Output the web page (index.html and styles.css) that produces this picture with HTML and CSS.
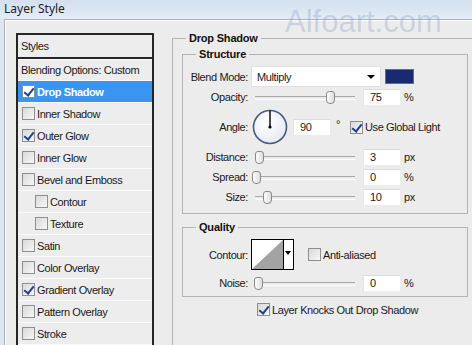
FILE: index.html
```html
<!DOCTYPE html>
<html>
	<head>
		<meta charset="utf-8">
		<title>Layer Style</title>
		<link rel="stylesheet" href="styles.css">
	</head>
	<body>
		<div class="titlebar">Layer Style</div>
		<div class="watermark">Alfoart.com</div>
		<div class="window">
			<ul class="styles">
				<li class="head">Styles</li>
				<li class="blend">Blending Options: Custom</li>
				<li class="current"><span class="cb on"></span>Drop Shadow</li>
				<li><span class="cb"></span>Inner Shadow</li>
				<li><span class="cb on"></span>Outer Glow</li>
				<li><span class="cb"></span>Inner Glow</li>
				<li><span class="cb"></span>Bevel and Emboss</li>
				<li class="sub"><span class="cb"></span>Contour</li>
				<li class="sub"><span class="cb"></span>Texture</li>
				<li><span class="cb"></span>Satin</li>
				<li><span class="cb"></span>Color Overlay</li>
				<li><span class="cb on"></span>Gradient Overlay</li>
				<li><span class="cb"></span>Pattern Overlay</li>
				<li><span class="cb"></span>Stroke</li>
			</ul>
			<fieldset class="group panel">
				<legend>Drop Shadow</legend>
				<fieldset class="group structure">
					<legend>Structure</legend>
					<div class="row row-blend">
						<label>Blend Mode:</label>
						<div class="select">Multiply<span class="arrow"></span></div>
						<div class="swatch"></div>
					</div>
					<div class="row">
						<label>Opacity:</label>
						<div class="track"><span class="thumb" style="left:71px"></span></div>
						<div class="num">75</div>
						<span class="unit">%</span>
					</div>
					<div class="row row-angle">
						<label>Angle:</label>
						<div class="dial">
							<svg width="36" height="36" viewBox="0 0 36 36">
								<defs>
									<radialGradient id="dialfill" cx="40%" cy="35%" r="70%">
										<stop offset="0" stop-color="#ffffff"/>
										<stop offset="1" stop-color="#e4eaf2"/>
									</radialGradient>
								</defs>
								<circle cx="18" cy="18" r="16.5" fill="url(#dialfill)" stroke="#4a5a7e" stroke-width="1.6"/>
								<line x1="18" y1="18" x2="18" y2="1.5" stroke="#000" stroke-width="1.4"/>
								<circle cx="18" cy="18" r="1.6" fill="#000"/>
							</svg>
						</div>
						<div class="num">90</div>
						<span class="deg">°</span>
						<span class="cb on"></span>
						<span class="cb-text">Use Global Light</span>
					</div>
					<div class="row">
						<label>Distance:</label>
						<div class="track"><span class="thumb" style="left:0px"></span></div>
						<div class="num">3</div>
						<span class="unit">px</span>
					</div>
					<div class="row">
						<label>Spread:</label>
						<div class="track"><span class="thumb" style="left:-3px"></span></div>
						<div class="num">0</div>
						<span class="unit">%</span>
					</div>
					<div class="row">
						<label>Size:</label>
						<div class="track"><span class="thumb" style="left:8px"></span></div>
						<div class="num">10</div>
						<span class="unit">px</span>
					</div>
				</fieldset>
				<fieldset class="group quality">
					<legend>Quality</legend>
					<div class="row row-contour">
						<label>Contour:</label>
						<div class="contour">
							<div class="curve">
								<svg width="31" height="29" viewBox="0 0 31 29">
									<polygon points="0,29 31,0 31,29" fill="#a3a3a3"/>
								</svg>
							</div>
							<div class="pick"><span class="arrow"></span></div>
						</div>
						<span class="cb"></span>
						<span class="cb-text">Anti-aliased</span>
					</div>
					<div class="row">
						<label>Noise:</label>
						<div class="track"><span class="thumb" style="left:-1px"></span></div>
						<div class="num">0</div>
						<span class="unit">%</span>
					</div>
				</fieldset>
				<div class="knock"><span class="cb on"></span>Layer Knocks Out Drop Shadow</div>
			</fieldset>
		</div>
	</body>
</html>
```

FILE: styles.css
```css
*{
	padding: 0;
	margin: 0;
	box-sizing: border-box;
}
ul{
	list-style: none;
}
html,body{
	width: 100%;
	height: 100%;
	overflow: hidden;
}
body{
	background: #dde7f2;
	font-family: "Liberation Sans", Arial, sans-serif;
	font-size: 11px;
	letter-spacing: -0.4px;
	color: #1a1a1a;
}
.titlebar{
	height: 19px;
	padding-left: 4px;
	line-height: 18px;
	font-family: "Noto Sans", "Open Sans", sans-serif;
	font-size: 12px;
	letter-spacing: 0;
	color: #1e1e1e;
	background: linear-gradient(#d3e0ee, #e4ecf6);
}
.watermark{
	position: absolute;
	left: 285px;
	top: 3px;
	font-family: "Liberation Sans", Arial, sans-serif;
	font-size: 31px;
	line-height: 38px;
	letter-spacing: 0;
	color: rgba(110, 145, 190, 0.28);
	pointer-events: none;
}
.window{
	display: flex;
	align-items: flex-start;
	height: 326px;
	overflow: hidden;
	margin-left: 4px;
	background: #ececec;
	border-top: 1px solid #a9b3bf;
	border-left: 1px solid #a9b3bf;
	box-shadow: inset 1px 1px 0 #fff;
}

/* left list */
.styles{
	flex: none;
	width: 138px;
	height: 330px;
	margin: 13px 0 0 11px;
	border: 2px solid #262626;
	border-bottom: none;
	background: #ededed;
}
.styles li{
	display: flex;
	align-items: center;
	height: 22px;
	padding-left: 4px;
	border-bottom: 1px solid #fafafa;
}
.styles li.head{
	height: 24px;
	padding-left: 3px;
	border-bottom: 2px solid #262626;
}
.styles li.blend{
	padding-left: 3px;
	border-top: 1px solid #fafafa;
}
.styles li.sub{
	padding-left: 17px;
}
.styles li.current{
	background: #3a95f0;
	color: #fff;
	font-weight: 700;
}
.styles li.current .cb{
	background: #fff;
}

/* checkbox */
.cb{
	flex: none;
	position: relative;
	display: inline-block;
	width: 13px;
	height: 13px;
	margin-right: 2px;
	border: 1px solid #8e8f8f;
	background: linear-gradient(135deg, #d9d9d9, #f7f7f7);
}
.cb.on::after{
	content: '';
	position: absolute;
	left: 3px;
	top: 0;
	width: 4px;
	height: 8px;
	border: solid #233f8e;
	border-width: 0 2px 2px 0;
	transform: rotate(38deg);
}

/* group boxes */
.group{
	min-width: 0;
	border: 1px solid #b4b4b4;
}
.group legend{
	padding: 0 3px;
	font-weight: 700;
	line-height: 13px;
	letter-spacing: -0.2px;
	color: #111;
}
.panel{
	flex: none;
	width: 320px;
	height: 330px;
	margin: 12px 0 0 18px;
	padding: 0 0 0 9px;
	border-right: none;
	border-bottom: none;
}
.panel > legend{
	margin-left: 4px;
}
.structure,
.quality{
	width: 286px;
	padding: 5px 0 8px 0;
	display: flex;
	flex-direction: column;
	gap: 4px;
}
.structure{
	margin-top: 3px;
}
.quality{
	margin-top: 7px;
	padding-bottom: 5px;
	gap: 5px;
}
.structure legend,
.quality legend{
	margin-left: 13px;
}

/* rows */
.row{
	display: flex;
	align-items: center;
	height: 16px;
}
.row label{
	flex: none;
	width: 65px;
	margin-right: 3px;
	text-align: right;
}
.row-blend{
	height: 21px;
	margin-bottom: -2px;
}
.row-angle{
	height: 36px;
}
.row-contour{
	height: 31px;
}
.select{
	position: relative;
	width: 130px;
	height: 21px;
	padding-left: 5px;
	line-height: 20px;
	background: #fff;
	border: 1px solid #e0e0e0;
}
.arrow{
	position: absolute;
	right: 5px;
	top: 8px;
	border-left: 4px solid transparent;
	border-right: 4px solid transparent;
	border-top: 4px solid #000;
}
.swatch{
	width: 29px;
	height: 15px;
	margin-left: 4px;
	background: #1a2a70;
	border: 1px solid #5d6d98;
}
.track{
	position: relative;
	flex: none;
	width: 100px;
	height: 16px;
	margin-left: 4px;
}
.track::before{
	content: '';
	position: absolute;
	left: 0;
	right: 0;
	top: 7px;
	height: 2px;
	border-top: 1px solid #a8a8a8;
	border-bottom: 1px solid #fff;
}
.thumb{
	position: absolute;
	top: 2px;
	width: 9px;
	height: 13px;
	border: 1px solid #8a8a8a;
	border-radius: 3px 3px 4px 4px;
	background: linear-gradient(90deg, #fdfdfd, #dedede);
}
.num{
	flex: none;
	width: 37px;
	height: 16px;
	margin-left: 8px;
	padding-left: 6px;
	line-height: 15px;
	background: #fff;
	border-top: 1px solid #dcdcdc;
	border-left: 1px solid #e6e6e6;
}
.unit{
	margin-left: 4px;
}
.dial{
	flex: none;
	width: 36px;
	height: 36px;
	margin-left: 1px;
}
.row-angle .num{
	margin-left: 5px;
}
.deg{
	margin: -6px 0 0 6px;
}
.row-angle .cb{
	margin-left: 10px;
}
.contour{
	display: flex;
	width: 43px;
	height: 31px;
	border: 1px solid #000;
	background: #fff;
}
.curve{
	width: 31px;
	height: 29px;
}
.pick{
	position: relative;
	flex: 1;
	border-left: 1px solid #000;
}
.pick .arrow{
	right: 2px;
	top: 11px;
	border-left-width: 3px;
	border-right-width: 3px;
}
.row-contour .cb{
	margin-left: 14px;
}
.knock{
	display: flex;
	align-items: center;
	height: 13px;
	margin-top: 6px;
	padding-left: 75px;
}
```
